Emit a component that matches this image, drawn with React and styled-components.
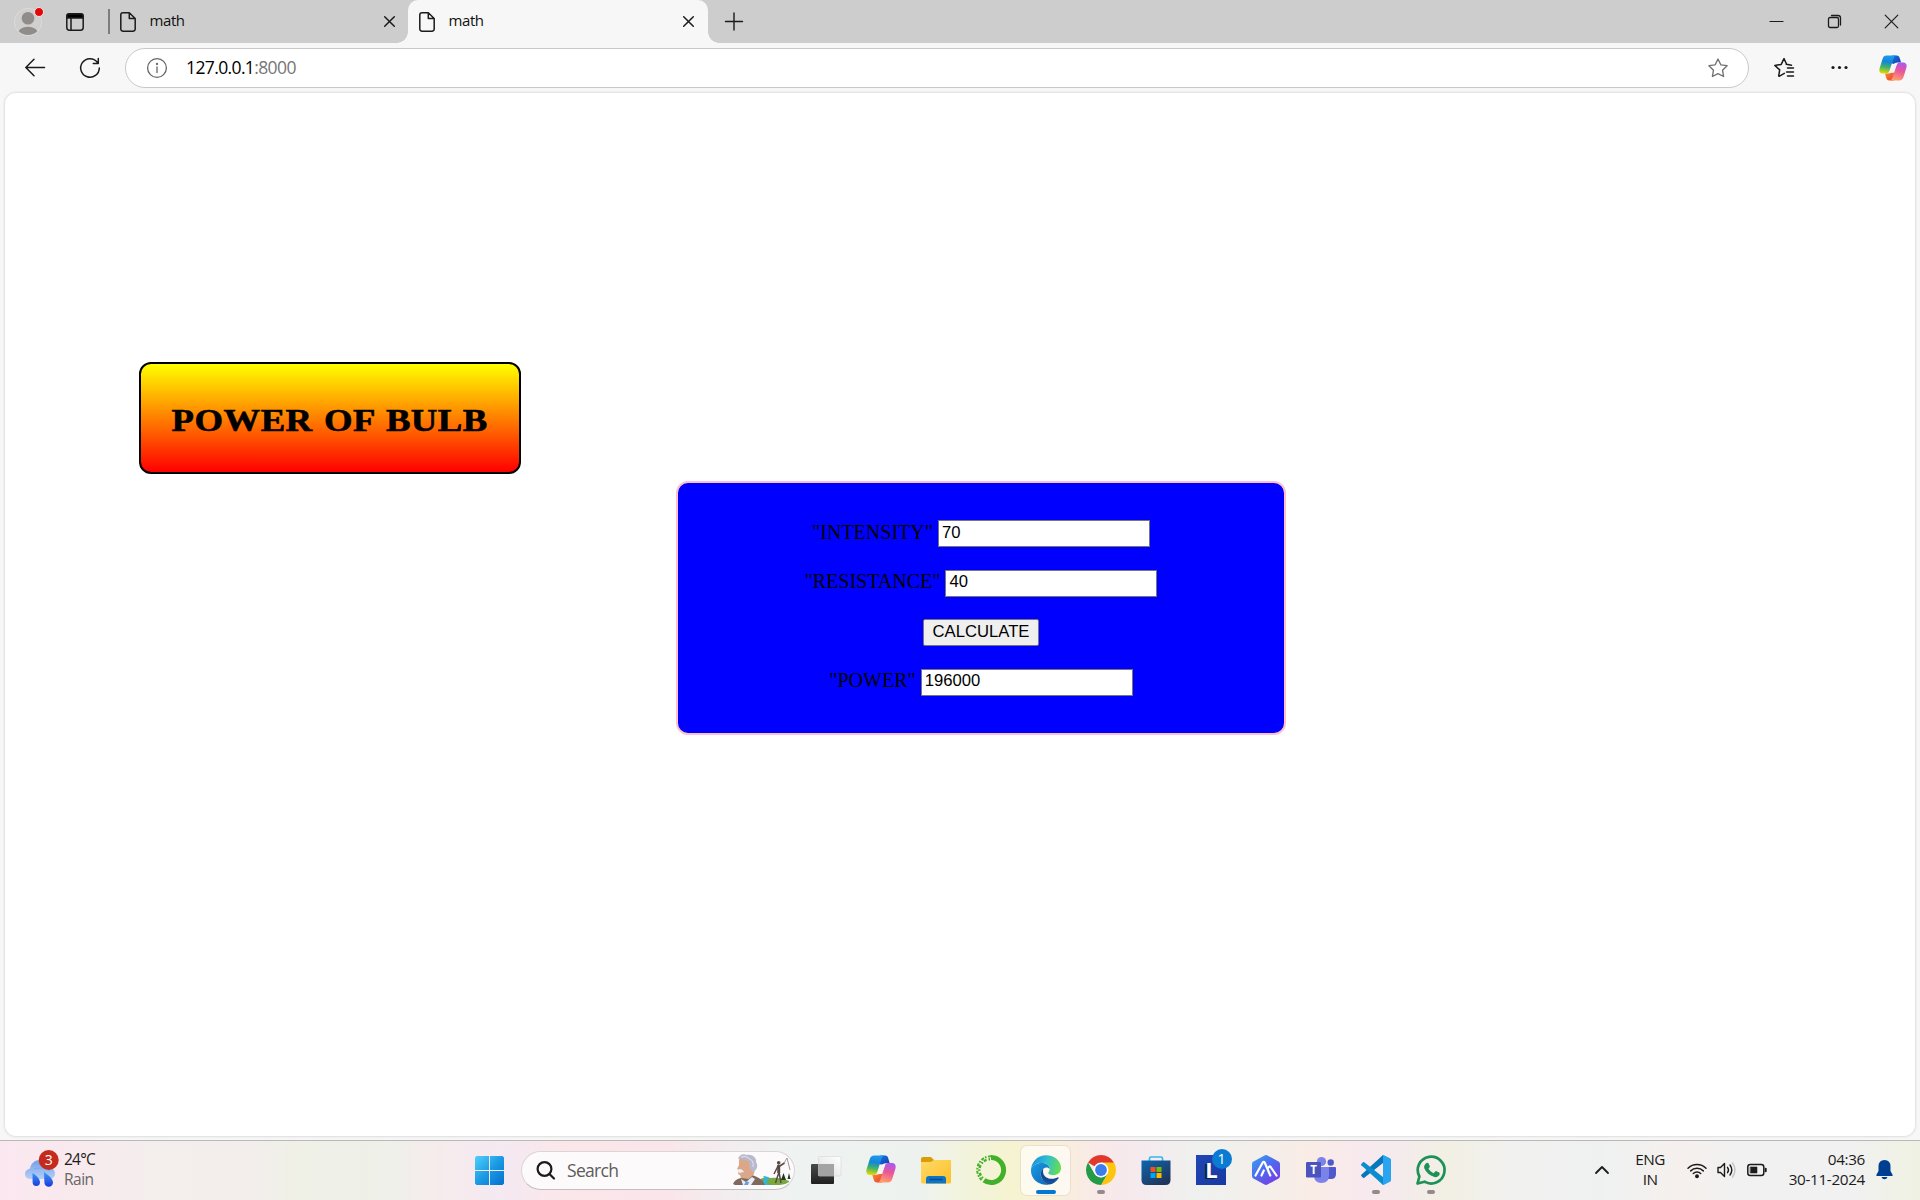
import React from 'react';
import styled, { createGlobalStyle } from 'styled-components';

const ui = `"Open Sans", "Noto Sans", sans-serif`;

const Global = createGlobalStyle`
  * { box-sizing: border-box; }
  html, body { margin: 0; padding: 0; overflow: hidden; }
  svg { display: block; flex: none; overflow: visible; }
`;

const Desktop = styled.div`
  width: 1920px;
  height: 1200px;
  display: flex;
  flex-direction: column;
  background: #f7f7f7;
  font-family: ${ui};
  overflow: hidden;
`;

/* ---------- tab strip ---------- */
const TabStrip = styled.div`
  height: 43px;
  flex: none;
  display: flex;
  align-items: center;
  background: #cdcdcd;
`;
const Profile = styled.div`
  padding-left: 14px;
  width: 66px;
`;
const Divider = styled.div`
  width: 1.5px;
  height: 25px;
  margin-left: 24px;
  background: #7d7d7d;
`;
const Tab = styled.div`
  position: relative;
  width: ${p => p.$w}px;
  height: 43px;
  padding: 0 ${p => (p.$active ? 14 : 13)}px 0 ${p => (p.$active ? 11 : 10.5)}px;
  display: flex;
  align-items: center;
  background: ${p => (p.$active ? '#f7f7f7' : 'transparent')};
  border-radius: 10px 10px 0 0;
  &::before, &::after {
    content: '';
    display: ${p => (p.$active ? 'block' : 'none')};
    position: absolute;
    bottom: 0;
    width: 11px;
    height: 11px;
  }
  &::before { left: -11px; background: radial-gradient(circle at 0 0, transparent 10.5px, #f7f7f7 11px); }
  &::after { right: -11px; background: radial-gradient(circle at 100% 0, transparent 10.5px, #f7f7f7 11px); }
`;
const TabTitle = styled.span`
  flex: 1;
  padding-left: 13.5px;
  font-size: 15px;
  line-height: 20px;
  letter-spacing: -0.4px;
  color: #111;
  margin-top: -4px;
`;
const NewTab = styled.div`
  padding-left: 17px;
  flex: 1;
`;
const WindowButtons = styled.div`
  display: flex;
  gap: 44.5px;
  padding-right: 22px;
`;

/* ---------- toolbar ---------- */
const Toolbar = styled.div`
  height: 50px;
  flex: none;
  display: flex;
  align-items: center;
  padding: 0 13px 0 25px;
`;
const Reload = styled.div`
  margin: 0 25px 0 35px;
`;
const AddressBar = styled.div`
  width: 1625px;
  height: 40px;
  display: flex;
  align-items: center;
  padding: 0 20px 0 21px;
  background: #fff;
  border: 1px solid #c9c9c9;
  border-radius: 20px;
`;
const Url = styled.div`
  flex: 1;
  padding-left: 19px;
  margin-top: -2px;
  font-size: 17.5px;
  letter-spacing: -0.62px;
  color: #000;
  span { color: #767676; }
`;
const Tools = styled.div`
  flex: 1;
  display: flex;
  align-items: center;
  padding-left: 25px;
`;
const More = styled.div`
  margin: 0 31px 0 37px;
`;

/* ---------- web page ---------- */
const Page = styled.main`
  height: 1043px;
  flex: none;
  margin: 0 5px;
  padding: 269px 0 0 134px;
  background: #fff;
  border-radius: 11px;
  box-shadow: 0 0 2px 1px #dedede;
  font-family: "Liberation Serif", "Times New Roman", serif;
  font-size: 20px;
`;
const Banner = styled.div`
  width: 382px;
  height: 112px;
  display: flex;
  align-items: center;
  justify-content: center;
  border: 2px solid #000;
  border-radius: 12px;
  background: linear-gradient(to bottom, yellow, red);
`;
const BannerTitle = styled.h1`
  margin: 5px 0 0;
  font-size: 31.5px;
  line-height: 36px;
  font-weight: bold;
  white-space: nowrap;
  word-spacing: 1.5px;
  letter-spacing: 0.4px;
  transform: scaleX(1.165);
  -webkit-text-stroke: 0.6px #000;
`;
const Form = styled.form`
  width: 610px;
  height: 254px;
  margin: 7px 0 0 537px;
  padding: 37px 0 0;
  display: flex;
  flex-direction: column;
  align-items: center;
  gap: 22.6px;
  border: 2px solid pink;
  border-radius: 12px;
  background: blue;
`;
const Field = styled.label`
  display: flex;
  align-items: center;
  gap: 5px;
  height: 27px;
  line-height: 23px;
  color: #000;
  span { margin-top: -3px; }
`;
const TextInput = styled.input`
  width: 212px;
  height: 27px;
  padding: 0 3px 2px;
  border: 1.5px solid #767676;
  border-radius: 0;
  background: #fff;
  color: #000;
  font: 16.67px "Liberation Sans", Arial, sans-serif;
`;
const Calculate = styled.button`
  width: 116px;
  height: 27px;
  padding: 0 0 2px;
  border: 1px solid #767676;
  border-radius: 2px;
  background: #efefef;
  color: #000;
  font: 16.67px "Liberation Sans", Arial, sans-serif;
`;

/* ---------- taskbar ---------- */
const Taskbar = styled.footer`
  height: 60px;
  flex: none;
  margin-top: 4px;
  padding-bottom: 1px;
  display: flex;
  align-items: center;
  border-top: 1px solid #b9b7b7;
  background: linear-gradient(90deg,
    #fbe7f0 0, #f9e9ee 60px, #f4eeed 150px, #f3eeec 250px, #eff0e6 300px, #eef0e9 390px,
    #f6ebec 440px, #f5e9f2 500px, #fbe7ea 570px, #fae5ea 660px, #f2edef 730px, #eef3f1 800px,
    #edf2ef 920px, #f2f3de 960px, #f5f3d0 1010px, #f8efdb 1060px, #f9e9e9 1100px, #f5eaee 1140px,
    #eff1ee 1200px, #f4efea 1260px, #f9ece6 1310px, #f8e9ee 1360px, #f4ebec 1400px, #f2f0e4 1450px,
    #f1f1ef 1510px, #eff1f1 1600px, #f5f0ed 1680px, #f1f1f1 1740px, #f1f1f1 1850px, #eff2e2 1920px);
`;
const Weather = styled.div`
  width: 475px;
  display: flex;
  align-items: center;
  padding: 0 0 3px 24px;
`;
const WeatherText = styled.div`
  padding-left: 5px;
  font-size: 15.5px;
  line-height: 20px;
  letter-spacing: -0.75px;
  color: #1c1c1c;
  div + div { color: #666; letter-spacing: -0.5px; }
`;
const SearchBox = styled.div`
  width: 274px;
  height: 39px;
  margin: 0 3px 0 17px;
  display: flex;
  align-items: center;
  padding: 0 4px 0 13.5px;
  border: 1px solid #dcd5d7;
  border-bottom-color: #c4bec0;
  border-radius: 20px;
  background: #fcfafa;
`;
const SearchLabel = styled.span`
  flex: 1;
  padding-left: 12.5px;
  font-size: 17.5px;
  letter-spacing: -0.7px;
  color: #5c5c5c;
`;
const Slot = styled.div`
  width: 55px;
  height: 49px;
  display: flex;
  justify-content: center;
`;
const SlotInner = styled.div`
  position: relative;
  width: 49px;
  height: 49px;
  padding-top: 9.5px;
  display: flex;
  flex-direction: column;
  align-items: center;
  gap: 5px;
  border-radius: 6px;
  background: ${p => (p.$active ? 'rgba(255,252,248,.75)' : 'transparent')};
  box-shadow: ${p => (p.$active ? '0 0 0 1px rgba(225,210,195,.55)' : 'none')};
`;
const Running = styled.div`
  width: ${p => (p.$active ? 20 : 8)}px;
  height: 4px;
  border-radius: 2px;
  background: ${p => (p.$active ? '#0078d4' : '#918b8b')};
`;
const Badge = styled.span`
  position: absolute;
  top: 3px;
  right: 3.5px;
  width: 20px;
  height: 20px;
  border-radius: 50%;
  background: #0a7bd2;
  color: #fff;
  font-size: 14px;
  line-height: 20px;
  text-align: center;
`;
const Tray = styled.div`
  flex: 1;
  display: flex;
  align-items: center;
  justify-content: flex-end;
  padding-right: 27px;
`;
const TrayText = styled.div`
  width: ${p => p.$w}px;
  text-align: ${p => p.$align};
  margin: ${p => p.$m};
  padding-bottom: 2px;
  font-size: 15.3px;
  line-height: 20px;
  letter-spacing: ${p => p.$ls}px;
  white-space: nowrap;
  color: #1c1c1c;
`;
const TrayIcons = styled.div`
  display: flex;
  align-items: center;
  gap: 10px;
`;

/* ---------- icons ---------- */
const Line = ({ w, h, sw = 1.4, c = '#1b1b1b', children, ...r }) => (
  <svg width={w} height={h} viewBox={`0 0 ${w} ${h}`} fill="none" stroke={c} strokeWidth={sw} strokeLinecap="round" strokeLinejoin="round" {...r}>{children}</svg>
);
const FileIcon = () => (
  <Line w={16} h={20} sw={1.5}><path d="M3 .8H9.3L15.2 6.5V17a2.2 2.2 0 0 1-2.2 2.2H3A2.2 2.2 0 0 1 .8 17V3A2.2 2.2 0 0 1 3 .8ZM9.3 1V6.6H15" /></Line>
);
const TabClose = () => <Line w={11} h={11} sw={1.5}><path d="M.7.7l9.6 9.6M10.3.7L.7 10.3" /></Line>;

const Avatar = () => (
  <svg width="30" height="30" viewBox="0 0 30 30">
    <defs><clipPath id="avatarClip"><circle cx="14" cy="15" r="13" /></clipPath></defs>
    <circle cx="14" cy="15" r="13.6" fill="#d0cfcd" stroke="#dddcda" />
    <g clipPath="url(#avatarClip)" fill="#8f8c89"><circle cx="14" cy="11.2" r="6.3" /><ellipse cx="14" cy="27" rx="10.2" ry="7.3" /></g>
    <circle cx="25" cy="5" r="4.5" fill="#e3060b" stroke="#f3e6e6" />
  </svg>
);
const TabActions = () => (
  <Line w={18} h={18} sw={1.5}><rect x=".8" y=".8" width="16.4" height="16.4" rx="2.6" /><path d="M1 3a2 2 0 0 1 2-2h12a2 2 0 0 1 2 2v2H1z" fill="#000" /><path d="M5 5v12" /></Line>
);
const Star = ({ lines }) => (
  <Line w={20} h={20} sw={lines ? 1.5 : 1.35} c={lines ? '#1b1b1b' : '#707070'}>
    {lines
      ? <path d="M12.6 6.6 10 1 7.2 6.8.8 7.8l4.9 4.5-1 6 .4.4 5.2-2.9M12.300 6.700l5.200.900M13.500 10.500H19.500M12.500 14.500H19.500M13.500 18.500H19.500" transform="translate(0 -.4)" />
      : <path d="M10 1l2.8 5.8 6.3.9-4.6 4.5 1.1 6.3L10 15.6l-5.6 2.900 1.1-6.3L.9 7.7l6.3-.9z" />}
  </Line>
);
const Copilot = ({ w, h, id }) => (
  <svg width={w} height={h} viewBox="0 0 30 28">
    <defs>
      <linearGradient id={id + 'a'} x1="0.5" y1="0" x2="0.35" y2="1"><stop offset="0" stopColor="#1b9df0" /><stop offset=".35" stopColor="#1684d8" /><stop offset=".65" stopColor="#3fb46a" /><stop offset="1" stopColor="#e9d900" /></linearGradient>
      <linearGradient id={id + 'b'} x1="0.7" y1="0" x2="0.4" y2="1"><stop offset="0" stopColor="#ab5af0" /><stop offset=".45" stopColor="#e9559a" /><stop offset="1" stopColor="#ffa16a" /></linearGradient>
      <linearGradient id={id + 'c'} x1="0" y1="0" x2="1" y2="1"><stop offset="0" stopColor="#1a7be0" /><stop offset="1" stopColor="#123bb5" /></linearGradient>
      <linearGradient id={id + 'd'} x1="0" y1="0" x2="1" y2="1"><stop offset="0" stopColor="#f9902c" /><stop offset="1" stopColor="#e83a36" /></linearGradient>
    </defs>
    <path d="M14 .5h5c2 0 2.800 1.200 3.300 3l1.400 4.700h-3.800c-2 0-3.200 1-3.800 1.500l-4-1z" fill={`url(#${id}c)`} />
    <path d="M16 27.500h-5c-2 0-2.800-1.200-3.300-3l-1.400-4.700h3.800c2 0 3.200-1 3.800-1.500l4 1z" fill={`url(#${id}d)`} />
    <path d="M8.200.5h11c-2 0-3 1-3.700 3.200L11.200 17c-.7 2.200-1.800 3-4 3H4.200C.8 20-.3 17.500.6 14.200L3.700 4.200C4.500 1.700 5.800.5 8.200.5Z" fill={`url(#${id}a)`} />
    <path d="M21.800 27.500h-11c2 0 3-1 3.700-3.200L18.800 11c.7-2.200 1.800-3 4-3h3c3.400 0 4.500 2.500 3.600 5.800l-3.100 10c-.8 2.500-2.100 3.700-4.500 3.700Z" fill={`url(#${id}b)`} />
    <path d="M16.500 9.500h2.700L15.500 19h-4L13.800 11.500q.7-2 2.700-2Z" fill="#f5f5f3" />
  </svg>
);

const Rain = () => (
  <svg width="35" height="38" viewBox="0 0 35 38">
    <defs>
      <linearGradient id="cloud" x1="0" y1="0" x2="0" y2="1"><stop offset="0" stopColor="#739fe8" /><stop offset="1" stopColor="#b4cff8" /></linearGradient>
      <linearGradient id="drop" x1="0" y1="0" x2="0" y2="1"><stop offset="0" stopColor="#3e9cf2" /><stop offset="1" stopColor="#1939e0" /></linearGradient>
    </defs>
    <path d="M7 29C3 29 1 27 1 24s2.500-5 5-5.500C7 13 11 10 16 10c6 0 9 4 9.500 8C29 18 31 20.500 31 23.500S29 29 25.500 29Z" fill="url(#cloud)" />
    <path d="M10 19q11-3 16 2" stroke="#7ea8ec" fill="none" />
    <path d="M8.500 23c4 2.500 7.500 6 7.500 9.300a3.700 3.700 0 0 1-7.400 0zM20 22c4.500 3 9 7 9 10.500a4.300 4.300 0 0 1-8.600 0z" fill="url(#drop)" />
    <circle cx="24.700" cy="10" r="10" fill="#c42b1c" />
    <text x="24.700" y="15" fontSize="14" textAnchor="middle" fill="#fff" fontFamily="Open Sans, sans-serif">3</text>
  </svg>
);
const Windows = () => (
  <svg width="29" height="29" viewBox="0 0 29 29">
    <defs><linearGradient id="win" gradientUnits="userSpaceOnUse" x1="0" y1="0" x2="29" y2="29"><stop offset="0" stopColor="#4fd0fc" /><stop offset=".5" stopColor="#1c9ae4" /><stop offset="1" stopColor="#0470d0" /></linearGradient></defs>
    <path d="M1.500 0H14v14H0V1.500zM15 0h12.500L29 1.500V14H15zM0 15h14v14H1.500L0 27.500zM15 15h14v12.500L27.500 29H15z" fill="url(#win)" />
  </svg>
);
const SearchArt = () => (
  <svg width="57" height="32" viewBox="0 0 57 32">
    <path d="M24 27q6-5 14-3 9-1 18 3v1q-4 3-9 3H20z" fill="#79a83f" />
    <path d="M31 22q8 1 4 4t3 5h-9q-2-3 2-5 2-2-1-3z" fill="#2eb6e4" />
    <path d="M0 30q2-5 8-6l5-3 6 0q10 3 13 10H2z" fill="#80685c" />
    <path d="M8 25l5 3 6-5 3 2-4 6h-8z" fill="#e6eef7" />
    <path d="M13 27l3 1-1 3h-4z" fill="#6d9ddd" />
    <path d="M6 7q0-4 4-6l9 1 4 6-2 12-5 5-8-1-1-3-2-1 1-4-2-1 2-4z" fill="#dba78b" />
    <path d="M5 5C6 1 10-1 14 1c5-1 10 3 9 7 3 4 0 9-3 10l-3-4-1-7c-4 0-5-3-11-2z" fill="#b9b9cd" />
    <path d="M8 3q5-2 9 2 4 2 3 8" stroke="#e3e3ef" fill="none" />
    <path d="M5 16q3-3 6 2l-5 1z" fill="#eeeef2" />
    <path d="M45.500 10.500 46 18l-3.500 11M46 18l2 11M45 12l-4 8M46 12.500l5.500-3.500" stroke="#584946" strokeWidth="1.500" fill="none" />
    <path d="M45.700 11v8" stroke="#584946" strokeWidth="3" />
    <circle cx="45.700" cy="8.800" r="1.800" fill="#584946" />
    <path d="M51 9L54 4l3 12" stroke="#8a7d7a" fill="none" strokeWidth=".8" />
    <path d="M50.500 19l2.500 7h-5zM56 19l1.500 6h-3z" fill="#233a24" />
  </svg>
);

const TaskView = () => (
  <svg width="30" height="30" viewBox="0 0 30 30">
    <defs><linearGradient id="tv" x1="0" y1="0" x2="0" y2="1"><stop offset="0" stopColor="#4a4a4a" /><stop offset="1" stopColor="#202020" /></linearGradient>
      <linearGradient id="tw" x1="1" y1="0" x2="0" y2="1"><stop offset="0" stopColor="#fff" /><stop offset="1" stopColor="#ddd" stopOpacity=".8" /></linearGradient></defs>
    <rect y="9" width="23" height="20" rx="1" fill="url(#tv)" />
    <rect x="7.500" y="1.500" width="22.500" height="19.500" rx="1" fill="url(#tw)" stroke="#d4d6d5" strokeWidth=".6" />
    <path d="M7.500 9H23v12H7.500z" fill="#a3a3a3" />
  </svg>
);
const Folder = () => (
  <svg width="30" height="30" viewBox="0 0 30 30">
    <defs><linearGradient id="fo" x1="0" y1="0" x2="1" y2="1"><stop offset="0" stopColor="#ffda68" /><stop offset="1" stopColor="#fcbf29" /></linearGradient></defs>
    <path d="M0 4Q0 2 2 2h8l3 3v5H0z" fill="#dc9c07" />
    <path d="M0 7h10l3-2h17v22q0 1.500-1.500 1.500h-27Q0 28.500 0 27z" fill="url(#fo)" />
    <path d="M5 28.500V24q0-3 3-3h14q3 0 3 3v4.500z" fill="#0f73c4" />
    <path d="M9 24.500h12" stroke="#064c90" strokeWidth="1.300" strokeLinecap="round" />
  </svg>
);
const Ring = () => (
  <svg width="30" height="30" viewBox="0 0 30 30" fill="none">
    <path d="M15 2.500A12.500 12.500 0 1 1 8 25.300" stroke="#43b02a" strokeWidth="5" />
    <path d="M15 1.300A13.700 13.700 0 0 0 6.500 25.800" stroke="#43b02a" strokeWidth="2" strokeDasharray="3 1.600 1.500 1.300" />
    <path d="M14 4.200A10.900 10.900 0 0 0 8 24" stroke="#43b02a" strokeWidth="2.400" strokeDasharray="1.500 2 3 1.500" />
  </svg>
);
const Edge = () => (
  <svg width="30" height="30" viewBox="0 0 30 30">
    <defs>
      <linearGradient id="eg1" x1="0" y1=".3" x2="1" y2=".5"><stop offset="0" stopColor="#1b8ddd" /><stop offset=".5" stopColor="#30bfd1" /><stop offset="1" stopColor="#65de4d" /></linearGradient>
      <linearGradient id="eg2" x1="0" y1="0" x2="1" y2="1"><stop offset="0" stopColor="#1a9be2" /><stop offset="1" stopColor="#0c66b8" /></linearGradient>
    </defs>
    <path d="M.2 13C1.500 5.500 7.500.2 15 .2c9 0 15 6 15 12.800 0 4.500-3.500 7-7.500 7-4 0-5.600-1.400-5.200-2.500 1-1.200 1.500-2 1.500-3.500 0-3-3.600-6-8.300-6C6 8 2 10.200.2 13Z" fill="url(#eg1)" />
    <path d="M.2 13C2 10.200 6 8 10.500 8c4.500 0 8 2.600 8.300 6-1-1.200-2.500-1.800-4-1.500-3.600.8-5 4-5 7 0 5 4.500 9 8.200 10C8 31-.5 24 0 15Z" fill="url(#eg2)" />
    <path d="M12.500 13.200C10 15 9.200 18.500 10.200 21c1.800 6 9 9.200 16.800 3 1.300-1 .7-2-.5-1.500-7 3.300-13.500 0-14.300-4.500-.3-1.800-.1-3.500.3-4.800Z" fill="#114a93" />
    <path d="M10.200 20c0 5 4 9 8.300 9.600 3-.4 6.500-2.600 8.500-5.600-7 4-13.500 2-16.800-4Z" fill="#164f9f" />
  </svg>
);
const Chrome = () => (
  <svg width="30" height="30" viewBox="0 0 30 30">
    <path d="M15 15 2.010 7.500A15 15 0 0 1 27.990 7.500Z" fill="#e0392b" />
    <path d="M15 7.500H27.990A15 15 0 0 1 15 30L21.500 18.700z" fill="#fdc510" />
    <path d="M2.010 7.500 8.500 18.750 15 22.500 21.500 18.750 15 30A15 15 0 0 1 2.010 7.500Z" fill="#259a47" />
    <circle cx="15" cy="15" r="7.500" fill="#fff" /><circle cx="15" cy="15" r="5.900" fill="#3b7ded" />
  </svg>
);
const Store = () => (
  <svg width="30" height="30" viewBox="0 0 30 30">
    <defs><linearGradient id="st" x1="0" y1="0" x2=".7" y2="1"><stop offset="0" stopColor="#0d66b0" /><stop offset="1" stopColor="#213459" /></linearGradient></defs>
    <path d="M8.500 7V3.500Q8.500 2 10 2h10q1.500 0 1.500 1.500V7" fill="none" stroke="#2fb9ee" strokeWidth="1.700" />
    <path d="M.5 5.500h29V25q0 5-5 5h-19q-5 0-5-5z" fill="url(#st)" />
    <path fill="#f25022" d="M9.500 12h5v5h-5z" /><path fill="#7fba00" d="M15.500 12h5v5h-5z" /><path fill="#00a4ef" d="M9.500 18h5v5h-5z" /><path fill="#ffb900" d="M15.500 18h5v5h-5z" />
  </svg>
);
const LGlyph = styled.div`
  width: 30px;
  height: 30px;
  flex: none;
  padding-left: 2px;
  background: linear-gradient(135deg, #2046b6, #163aa0);
  color: #fff;
  font: bold 22px/28px ${ui};
  text-align: center;
  text-shadow: -2px 1px 0 #123;
`;
const Hex = () => (
  <svg width="28" height="30" viewBox="0 0 28 30">
    <defs><linearGradient id="hx" x1="0" y1="0" x2=".8" y2="1"><stop offset="0" stopColor="#37a4ee" /><stop offset=".5" stopColor="#4d6bf0" /><stop offset="1" stopColor="#7a3be6" /></linearGradient></defs>
    <path d="M12.500.5q1.500-.8 3 0l11 6Q28 7.400 28 9v12q0 1.600-1.500 2.500l-11 6q-1.500.8-3 0l-11-6Q0 22.600 0 21V9q0-1.600 1.500-2.500z" fill="url(#hx)" />
    <path d="M3.500 20.500 10.700 7.500q1-1.500 2 0l5.600 13M9.500 20.500l2.300-5M16.500 12.500q1.300-2.500 2.500 0l5.500 8" fill="none" stroke="#fff" strokeWidth="2.200" strokeLinecap="round" />
  </svg>
);
const Teams = () => (
  <svg width="30" height="30" viewBox="0 0 30 30">
    <circle cx="15.500" cy="6.500" r="4.600" fill="#7b83eb" /><circle cx="24.700" cy="7.500" r="3.200" fill="#5059c9" />
    <path d="M20 12h9q1 0 1 1v6q0 5-5 5h-3z" fill="#5059c9" />
    <path d="M8 12h15v8q0 8-7.500 8T8 20z" fill="#7b83eb" />
    <rect y="7" width="15" height="15.500" rx="1.300" fill="#4b53bc" />
    <text x="7.500" y="18.700" fontSize="11.500" fontWeight="bold" textAnchor="middle" fill="#fff" fontFamily="Open Sans, sans-serif">T</text>
  </svg>
);
const Code = () => (
  <svg width="30" height="30" viewBox="0 0 30 30">
    <path d="M22 0v8L3.300 22.800q-.7.4-1.300 0L.3 21q-.5-.6 0-1.200z" fill="#0877b9" />
    <path d="M22 30v-8L3.300 7.200q-.7-.4-1.300 0L.3 9q-.5.6 0 1.200z" fill="#0b8bd0" />
    <path d="M21 .3q.7-.6 1.500-.2L29 3.200q1 .5 1 1.500v20.600q0 1-1 1.500l-6.500 3.100q-.8.4-1.500-.2 1 .3 1-1V1.300q0-1.300-1-1z" fill="#28a4f1" />
  </svg>
);
const WhatsApp = () => (
  <svg width="30" height="30" viewBox="0 0 30 30">
    <path d="M1.500 28.500 3.400 21.500A13.400 13.400 0 1 1 8.500 26.700Z" fill="none" stroke="#1d9157" strokeWidth="2.700" strokeLinejoin="round" />
    <path d="M10.500 8q1-.8 2 .2l1.300 3q.3.900-1.300 2.500 1.800 3.200 5 4.500l1.700-1.800q.6-.5 1.300-.1l2.700 1.300q1 .6.200 2.500-1.500 2.700-5 2-7.500-2.500-10-8.500Q7.200 10.500 10.500 8Z" fill="#1d9157" />
  </svg>
);
const Wifi = () => (
  <Line w={20} h={16} sw={1.5}><path d="M1 6.200a13 13 0 0 1 18 0M3.700 8.900a9 9 0 0 1 12.600 0M6.300 11.500a5.300 5.300 0 0 1 7.400 0" /><circle cx="10" cy="14.200" r="1.200" fill="#1b1b1b" /></Line>
);
const Volume = () => (
  <Line w={20} h={16} sw={1.4}><path d="M1 5.500h2.500L7.500 1.500v13L3.500 10.500H1zM10.500 5.300q2 2.700 0 5.400M13 3q3.600 5 0 10" /><path d="M15.500 1q5 7 0 14" stroke="#c4c4c4" /></Line>
);
const Battery = () => (
  <Line w={20} h={14} sw={1.5}><rect x=".8" y="1.500" width="16" height="11" rx="2.500" /><path d="M18.700 5.700v2.600" strokeWidth="2" /><rect x="3.500" y="4" width="6.500" height="6" fill="#1b1b1b" strokeWidth=".6" /></Line>
);
const Bell = () => (
  <svg width="17" height="20" viewBox="0 0 17 20"><path d="M8.500 0q6 .2 6 6.500V11l2.200 4q.2 1-.8 1H1.100q-1 0-.8-1l2.200-4V6.500Q2.500.2 8.500 0ZM5.500 17h6q-.7 2.200-3 2.200t-3-2.200z" fill="#003e92" /></svg>
);

const apps = [
  { icon: <TaskView /> },
  { icon: <Copilot w={30} h={28} id="cpB" /> },
  { icon: <Folder /> },
  { icon: <Ring /> },
  { icon: <Edge />, running: true, active: true },
  { icon: <Chrome />, running: true },
  { icon: <Store /> },
  { icon: <LGlyph>L</LGlyph>, badge: '1' },
  { icon: <Hex /> },
  { icon: <Teams /> },
  { icon: <Code />, running: true },
  { icon: <WhatsApp />, running: true },
];

const Entry = ({ label, value }) => (
  <Field><span>"{label}"</span><TextInput defaultValue={value} /></Field>
);

export default function App() {
  return (
    <Desktop>
      <Global />
      <TabStrip>
        <Profile><Avatar /></Profile>
        <TabActions />
        <Divider />
        <Tab $w={298.5}><FileIcon /><TabTitle>math</TabTitle><TabClose /></Tab>
        <Tab $w={300} $active><FileIcon /><TabTitle>math</TabTitle><TabClose /></Tab>
        <NewTab><Line w={18} h={18} sw={1.4}><path d="M.5 8.500h17M9 0v17" /></Line></NewTab>
        <WindowButtons>
          <Line w={13} h={13} sw={1.2}><path d="M0 6.500h13" /></Line>
          <Line w={13} h={13} sw={1.3}><rect x=".5" y="2.500" width="10" height="10" rx="1.500" /><path d="M3.500.5H10a2.500 2.500 0 0 1 2.500 2.500v7" /></Line>
          <Line w={13} h={13} sw={1.2}><path d="M.2.2l12.600 12.600M12.800.2.2 12.800" /></Line>
        </WindowButtons>
      </TabStrip>
      <Toolbar>
        <Line w={20} h={18} sw={1.5}><path d="M19.500 8.500H1M9 .3.800 8.500 9 16.700" /></Line>
        <Reload><Line w={20} h={20} sw={1.5}><path d="M17.300 4.200A9.300 9.300 0 1 0 19.300 10M18.300.5V5.500h-5" /></Line></Reload>
        <AddressBar>
          <Line w={20} h={20} sw={1.3} c="#666"><circle cx="10" cy="10" r="9.400" /><path d="M10 9v5.500" /><circle cx="10" cy="6" r=".5" /></Line>
          <Url>127.0.0.1<span>:8000</span></Url>
          <Star />
        </AddressBar>
        <Tools>
          <Star lines />
          <More><svg width="17" height="4" viewBox="0 0 17 4" fill="#1b1b1b"><circle cx="2" cy="1.500" r="1.600" /><circle cx="8.500" cy="1.500" r="1.600" /><circle cx="15" cy="1.500" r="1.600" /></svg></More>
          <Copilot w={28} h={26} id="cpA" />
        </Tools>
      </Toolbar>
      <Page>
        <Banner><BannerTitle>POWER OF BULB</BannerTitle></Banner>
        <Form onSubmit={e => e.preventDefault()}>
          <Entry label="INTENSITY" value="70" />
          <Entry label="RESISTANCE" value="40" />
          <Calculate>CALCULATE</Calculate>
          <Entry label="POWER" value="196000" />
        </Form>
      </Page>
      <Taskbar>
        <Weather>
          <Rain />
          <WeatherText><div>24°C</div><div>Rain</div></WeatherText>
        </Weather>
        <Windows />
        <SearchBox>
          <Line w={19} h={19} sw={2.2}><circle cx="8.500" cy="8" r="6.900" /><path d="M13.500 13l4.500 4.500" /></Line>
          <SearchLabel>Search</SearchLabel>
          <SearchArt />
        </SearchBox>
        {apps.map((a, i) => (
          <Slot key={i}>
            <SlotInner $active={a.active}>
              {a.icon}
              {a.running && <Running $active={a.active} />}
              {a.badge && <Badge>{a.badge}</Badge>}
            </SlotInner>
          </Slot>
        ))}
        <Tray>
          <Line w={14} h={8} sw={1.8}><path d="M1 7l6-6 6 6" /></Line>
          <TrayText $w={40} $align="center" $m="0 17px 0 21px" $ls={-0.6}>ENG<br />IN</TrayText>
          <TrayIcons><Wifi /><Volume /><Battery /></TrayIcons>
          <TrayText $w={80} $align="right" $m="0 11px 0 18px" $ls={-0.35}>04:36<br />30-11-2024</TrayText>
          <Bell />
        </Tray>
      </Taskbar>
    </Desktop>
  );
}
